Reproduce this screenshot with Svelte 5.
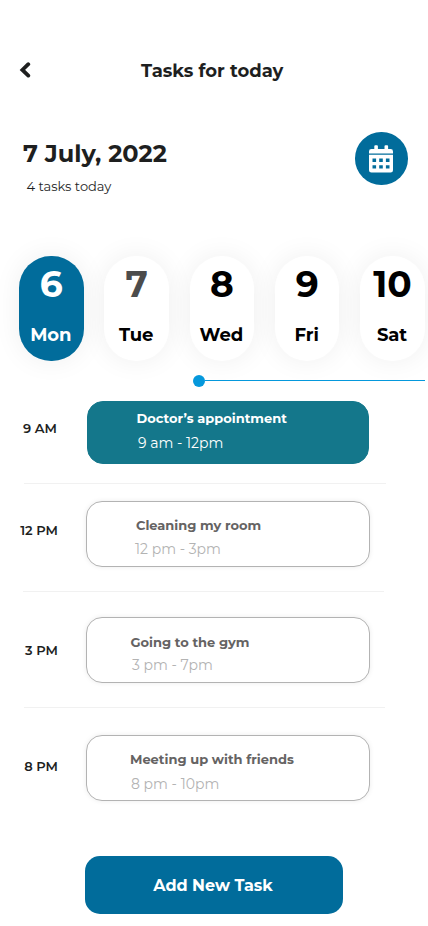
<script>
  const days = [
    { date: '6', name: 'Mon', active: true },
    { date: '7', name: 'Tue', muted: true },
    { date: '8', name: 'Wed' },
    { date: '9', name: 'Fri' },
    { date: '10', name: 'Sat' }
  ];

  // Per-row metrics: row height, space above the card, label offset and text insets.
  const tasks = [
    { time: '9 AM', title: 'Doctor’s appointment', span: '9 am - 12pm', active: true, h: 97, top: 14, label: 31, inset: 29, x: 48.5, sx: 50, y: 7, gap: 7, line: 362, lx: 24 },
    { time: '12 PM', title: 'Cleaning my room', span: '12 pm - 3pm', h: 108, top: 17, label: 36, inset: 28, x: 49, sx: 48, y: 14, gap: 6, line: 361, lx: 23 },
    { time: '3 PM', title: 'Going to the gym', span: '3 pm - 7pm', h: 116, top: 25, label: 48, inset: 28, x: 43.5, sx: 45, y: 15, gap: 5, line: 361, lx: 24 },
    { time: '8 PM', title: 'Meeting up with friends', span: '8 pm - 10pm', h: 121, top: 27, label: 48, inset: 28, x: 43, sx: 44, y: 14, gap: 7 }
  ];
</script>

<main>
  <header>
    <button class="back" aria-label="Back">
      <svg width="12" height="16" viewBox="0 0 12 16"><path d="M9.300 2.200 3.400 7.900l5.900 5.700" fill="none" stroke="#1e1f1f" stroke-width="3.800" stroke-linejoin="miter" stroke-linecap="round" /></svg>
    </button>
    <h1>Tasks for today</h1>
  </header>

  <section class="summary">
    <div>
      <h2>7 July, 2022</h2>
      <p>4 tasks today</p>
    </div>
    <button class="calendar" aria-label="Calendar">
      <svg width="24" height="28" viewBox="0 0 24 28">
        <path fill="#fff" fill-rule="evenodd" d="M0 9.800h24v15.400A2.400 2.400 0 0 1 21.600 27.600H2.400A2.400 2.400 0 0 1 0 25.200zM3.500 13.500v3.400h3.600v-3.400zM10.200 13.500v3.400h3.600v-3.400zM16.900 13.500v3.400h3.600v-3.400zM3.500 20.200v3.400h3.600v-3.400zM10.200 20.200v3.400h3.600v-3.400zM16.900 20.200v3.400h3.600v-3.400z" />
        <path fill="#fff" d="M0 8.400V6.400a2.400 2.400 0 0 1 2.400-2.400H5.300V1.200q0-1 1-1h1.600q1 0 1 1V4h6.600V1.200q0-1 1-1h1.600q1 0 1 1V4h2.500A2.400 2.400 0 0 1 24 6.400v2z" />
      </svg>
    </button>
  </section>

  <section class="days">
    {#each days as day}
      <div class="day" class:active={day.active} class:muted={day.muted}>
        <strong>{day.date}</strong>
        <span>{day.name}</span>
      </div>
    {/each}
  </section>

  <div class="now"><i></i><b></b></div>

  <section class="tasks">
    {#each tasks as t}
      <div class="row" style:height="{t.h}px">
        <div class="slot">
          <time style:padding-top="{t.label}px" style:padding-right="{t.inset}px">{t.time}</time>
          <article class:active={t.active} style:margin-top="{t.top}px" style:padding-top="{t.y}px">
            <h3 style:margin-left="{t.x}px">{t.title}</h3>
            <p style:margin-left="{t.sx}px" style:margin-top="{t.gap}px">{t.span}</p>
          </article>
        </div>
        {#if t.line}
          <hr style:width="{t.line}px" style:margin-left="{t.lx}px" />
        {/if}
      </div>
    {/each}
  </section>

  <button class="add">Add New Task</button>
</main>

<style>
  :global(body) { background: #fff; }
  * { box-sizing: border-box; }
  main {
    display: flex;
    flex-direction: column;
    width: 428px;
    height: 926px;
    overflow: hidden;
    background: #fff;
    color: #1e1f1f;
    font-family: Montserrat, Inter, sans-serif;
  }
  h1, h2, h3, p { margin: 0; white-space: nowrap; }
  button { border: 0; padding: 0; font-family: inherit; }
  svg { display: block; }

  header { display: flex; align-items: center; height: 82px; padding: 58px 0 0 19px; }
  .back { width: 12px; height: 16px; margin-right: 110px; background: none; }
  h1 { margin-top: 1px; font-size: 18px; line-height: 24px; font-weight: 700; }

  .summary { display: flex; justify-content: space-between; height: 174px; padding: 50px 20.500px 0 23px; }
  h2 { margin-top: 6px; font-size: 24px; line-height: 32px; font-weight: 700; }
  .summary p { margin: 6px 0 0 3.500px; font-size: 13px; line-height: 20px; }
  .calendar { display: grid; place-items: center; width: 52.500px; height: 52.500px; padding-top: 2px; border-radius: 50%; background: #016c9b; }

  .days { display: flex; gap: 20.800px; height: 105px; padding-left: 19px; }
  .day {
    display: flex;
    flex: none;
    flex-direction: column;
    align-items: center;
    width: 64.500px;
    height: 105px;
    border-radius: 32px;
    background: #fff;
    color: #000;
    box-shadow: 0 0 28px rgba(0, 0, 0, 0.065);
  }
  .day strong { margin-top: 8px; font-size: 36px; line-height: 40px; font-weight: 700; }
  .day span { margin: 19px 1px 0 0; font-size: 18px; line-height: 24px; font-weight: 700; letter-spacing: -0.1px; }
  .day.active { background: #016c9b; color: #fff; }
  .day.muted strong { color: #4c4c4c; }

  .now { display: flex; align-items: center; height: 12px; margin: 14px 3px 0 193px; }
  .now i { width: 12px; height: 12px; border-radius: 50%; background: #0598dc; }
  .now b { flex: 1; height: 1px; margin-top: -1px; background: #0598dc; }

  .row { display: flex; flex-direction: column; justify-content: space-between; }
  .slot { display: flex; }
  time { width: 86px; text-align: right; font-size: 13px; line-height: 20px; font-weight: 600; white-space: nowrap; }
  article {
    width: 284px;
    height: 66px;
    border: 1px solid #b3b3b3;
    border-radius: 16px;
    background: #fff;
    box-shadow: 0 0 5px rgba(0, 0, 0, 0.08);
  }
  article.active { width: 282px; height: 63px; margin-left: 1px; border-color: #14778b; background: #14778b; box-shadow: none; color: #fff; }
  h3 { color: #656363; font-size: 13px; line-height: 18px; font-weight: 700; }
  article p { color: #b3b3b3; font-size: 14px; line-height: 18px; }
  article.active h3, article.active p { color: #fff; }
  hr { flex: none; height: 1px; margin: 0; border: 0; background: #f1f1f1; }

  .add {
    width: 258px;
    height: 58px;
    margin: 27px 0 0 85px;
    padding-right: 2px;
    border-radius: 15px;
    background: #016c9b;
    color: #fff;
    font-size: 16px;
    font-weight: 700;
  }
</style>
